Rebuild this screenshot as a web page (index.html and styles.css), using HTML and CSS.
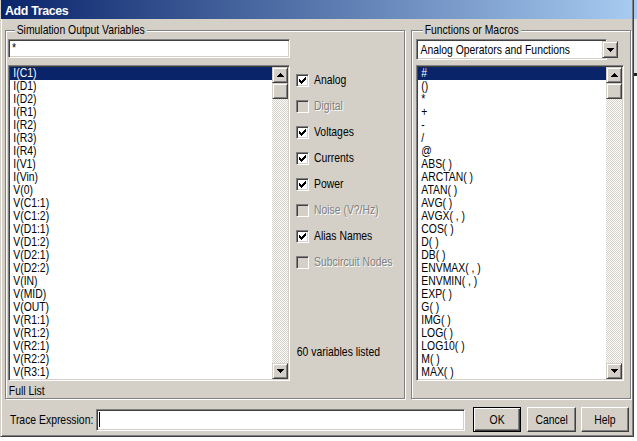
FILE: index.html
```html
<!DOCTYPE html>
<html>
<head>
<meta charset="utf-8">
<link rel="stylesheet" href="styles.css">
</head>
<body>
<div class="window">
  <div class="titlebar">Add Traces</div>
  <div class="client">
    <div class="groups">
      <div class="group group-left">
        <div class="legend">Simulation Output Variables</div>
        <div class="left-body">
          <div class="listcol">
            <div class="textbox"><span class="nx">*</span></div>
            <div class="listbox">
              <div class="items">
                <div class="item sel">I(C1)</div>
                <div class="item">I(D1)</div>
                <div class="item">I(D2)</div>
                <div class="item">I(R1)</div>
                <div class="item">I(R2)</div>
                <div class="item">I(R3)</div>
                <div class="item">I(R4)</div>
                <div class="item">I(V1)</div>
                <div class="item">I(Vin)</div>
                <div class="item">V(0)</div>
                <div class="item">V(C1:1)</div>
                <div class="item">V(C1:2)</div>
                <div class="item">V(D1:1)</div>
                <div class="item">V(D1:2)</div>
                <div class="item">V(D2:1)</div>
                <div class="item">V(D2:2)</div>
                <div class="item">V(IN)</div>
                <div class="item">V(MID)</div>
                <div class="item">V(OUT)</div>
                <div class="item">V(R1:1)</div>
                <div class="item">V(R1:2)</div>
                <div class="item">V(R2:1)</div>
                <div class="item">V(R2:2)</div>
                <div class="item">V(R3:1)</div>
              </div>
              <div class="vscroll">
                <div class="sbtn"><svg width="7" height="4" shape-rendering="crispEdges"><rect x="3" y="0" width="1" height="1"/><rect x="2" y="1" width="3" height="1"/><rect x="1" y="2" width="5" height="1"/><rect x="0" y="3" width="7" height="1"/></svg></div>
                <div class="thumb"></div>
                <div class="track"></div>
                <div class="sbtn"><svg width="7" height="4" shape-rendering="crispEdges"><rect x="0" y="0" width="7" height="1"/><rect x="1" y="1" width="5" height="1"/><rect x="2" y="2" width="3" height="1"/><rect x="3" y="3" width="1" height="1"/></svg></div>
              </div>
            </div>
            <div class="fulllist">Full List</div>
          </div>
          <div class="checkcol">
            <div class="check"><div class="cbox"><svg width="9" height="9" shape-rendering="crispEdges"><g transform="translate(1,1)"><rect x="6" y="0" width="1" height="1"/><rect x="5" y="1" width="2" height="1"/><rect x="0" y="2" width="1" height="1"/><rect x="4" y="2" width="3" height="1"/><rect x="0" y="3" width="2" height="1"/><rect x="3" y="3" width="3" height="1"/><rect x="0" y="4" width="5" height="1"/><rect x="1" y="5" width="3" height="1"/><rect x="2" y="6" width="1" height="1"/></g></svg></div><span class="lbl">Analog</span></div>
            <div class="check disabled"><div class="cbox"></div><span class="lbl">Digital</span></div>
            <div class="check"><div class="cbox"><svg width="9" height="9" shape-rendering="crispEdges"><g transform="translate(1,1)"><rect x="6" y="0" width="1" height="1"/><rect x="5" y="1" width="2" height="1"/><rect x="0" y="2" width="1" height="1"/><rect x="4" y="2" width="3" height="1"/><rect x="0" y="3" width="2" height="1"/><rect x="3" y="3" width="3" height="1"/><rect x="0" y="4" width="5" height="1"/><rect x="1" y="5" width="3" height="1"/><rect x="2" y="6" width="1" height="1"/></g></svg></div><span class="lbl">Voltages</span></div>
            <div class="check"><div class="cbox"><svg width="9" height="9" shape-rendering="crispEdges"><g transform="translate(1,1)"><rect x="6" y="0" width="1" height="1"/><rect x="5" y="1" width="2" height="1"/><rect x="0" y="2" width="1" height="1"/><rect x="4" y="2" width="3" height="1"/><rect x="0" y="3" width="2" height="1"/><rect x="3" y="3" width="3" height="1"/><rect x="0" y="4" width="5" height="1"/><rect x="1" y="5" width="3" height="1"/><rect x="2" y="6" width="1" height="1"/></g></svg></div><span class="lbl">Currents</span></div>
            <div class="check"><div class="cbox"><svg width="9" height="9" shape-rendering="crispEdges"><g transform="translate(1,1)"><rect x="6" y="0" width="1" height="1"/><rect x="5" y="1" width="2" height="1"/><rect x="0" y="2" width="1" height="1"/><rect x="4" y="2" width="3" height="1"/><rect x="0" y="3" width="2" height="1"/><rect x="3" y="3" width="3" height="1"/><rect x="0" y="4" width="5" height="1"/><rect x="1" y="5" width="3" height="1"/><rect x="2" y="6" width="1" height="1"/></g></svg></div><span class="lbl">Power</span></div>
            <div class="check disabled"><div class="cbox"></div><span class="lbl">Noise (V?/Hz)</span></div>
            <div class="check"><div class="cbox"><svg width="9" height="9" shape-rendering="crispEdges"><g transform="translate(1,1)"><rect x="6" y="0" width="1" height="1"/><rect x="5" y="1" width="2" height="1"/><rect x="0" y="2" width="1" height="1"/><rect x="4" y="2" width="3" height="1"/><rect x="0" y="3" width="2" height="1"/><rect x="3" y="3" width="3" height="1"/><rect x="0" y="4" width="5" height="1"/><rect x="1" y="5" width="3" height="1"/><rect x="2" y="6" width="1" height="1"/></g></svg></div><span class="lbl">Alias Names</span></div>
            <div class="check disabled"><div class="cbox"></div><span class="lbl">Subcircuit Nodes</span></div>
            <div class="count">60 variables listed</div>
          </div>
        </div>
      </div>
      <div class="group group-right">
        <div class="legend">Functions or Macros</div>
        <div class="combo">
          <div class="combo-text">Analog Operators and Functions</div>
          <div class="combo-btn"><svg width="7" height="4" shape-rendering="crispEdges"><rect x="0" y="0" width="7" height="1"/><rect x="1" y="1" width="5" height="1"/><rect x="2" y="2" width="3" height="1"/><rect x="3" y="3" width="1" height="1"/></svg></div>
        </div>
        <div class="listbox flist">
          <div class="items">
            <div class="item sel">#</div>
            <div class="item">()</div>
            <div class="item">*</div>
            <div class="item">+</div>
            <div class="item">-</div>
            <div class="item">/</div>
            <div class="item">@</div>
            <div class="item">ABS( )</div>
            <div class="item">ARCTAN( )</div>
            <div class="item">ATAN( )</div>
            <div class="item">AVG( )</div>
            <div class="item">AVGX( , )</div>
            <div class="item">COS( )</div>
            <div class="item">D( )</div>
            <div class="item">DB( )</div>
            <div class="item">ENVMAX( , )</div>
            <div class="item">ENVMIN( , )</div>
            <div class="item">EXP( )</div>
            <div class="item">G( )</div>
            <div class="item">IMG( )</div>
            <div class="item">LOG( )</div>
            <div class="item">LOG10( )</div>
            <div class="item">M( )</div>
            <div class="item">MAX( )</div>
          </div>
          <div class="vscroll">
            <div class="sbtn"><svg width="7" height="4" shape-rendering="crispEdges"><rect x="3" y="0" width="1" height="1"/><rect x="2" y="1" width="3" height="1"/><rect x="1" y="2" width="5" height="1"/><rect x="0" y="3" width="7" height="1"/></svg></div>
            <div class="thumb"></div>
            <div class="track"></div>
            <div class="sbtn"><svg width="7" height="4" shape-rendering="crispEdges"><rect x="0" y="0" width="7" height="1"/><rect x="1" y="1" width="5" height="1"/><rect x="2" y="2" width="3" height="1"/><rect x="3" y="3" width="1" height="1"/></svg></div>
          </div>
        </div>
      </div>
    </div>
    <div class="bottom">
      <div class="trace-label">Trace Expression:</div>
      <div class="trace-input"><span class="caret"></span></div>
      <div class="btn default btn-ok"><span class="nx-c">OK</span></div>
      <div class="btn btn-cancel"><span class="nx-c">Cancel</span></div>
      <div class="btn btn-help"><span class="nx-c">Help</span></div>
    </div>
  </div>
</div>
</body>
</html>
```

FILE: styles.css
```css
* { box-sizing: border-box; }
html, body { margin: 0; padding: 0; }
body {
  width: 637px;
  height: 441px;
  overflow: hidden;
  background: linear-gradient(to bottom, #a6caf0 0 19px, #e4e4e4 19px 73px, #202020 73px 76px, #ffffff 76px);
  font-family: "Liberation Sans", Arial, sans-serif;
  font-size: 12.6px;
  color: #000;
}
/* the dialog font is a tall, narrow bitmap sans: squeeze Liberation Sans horizontally */
.nx, .nx-c, .legend, .lbl, .count, .fulllist, .combo-text, .trace-label {
  display: inline-block;
  transform: scaleX(0.825);
  transform-origin: 0 50%;
}
.nx-c { transform-origin: 50% 50%; }
.window {
  width: 634px;
  height: 437px;
  background: #d4d0c8;
  border-left: 1px solid #d4d0c8;
  border-right: 1px solid #404040;
  border-bottom: 1px solid #404040;
  box-shadow: inset 1px 0 #fff, inset -1px -1px #808080;
  display: flex;
  flex-direction: column;
}
.titlebar {
  height: 19px;
  margin-right: 1px;
  padding: 2px 0 0 4px;
  display: flex;
  align-items: center;
  background: linear-gradient(to right, #0a246a, #a6caf0);
  color: #fff;
  font-family: "Liberation Sans", Arial, sans-serif;
  font-weight: bold;
  font-size: 12.4px;
  letter-spacing: -0.35px;
}
.client {
  flex: 1;
  padding: 11px 1px 0 4px;
  display: flex;
  flex-direction: column;
}
.groups {
  display: flex;
  gap: 6px;
  height: 369px;
}
.group {
  border: 1px solid #808080;
  box-shadow: inset 1px 1px #fff, 1px 1px #fff;
  display: flex;
  flex-direction: column;
  flex: none;
}
.legend {
  align-self: flex-start;
  height: 13px;
  line-height: 13px;
  margin: -7px 0 2px 7px;
  padding: 0 3px 0 2px;
  background: #d4d0c8;
  white-space: nowrap;
}
.group-left {
  width: 400px;
  padding-left: 2px;
}
.group-left .legend { margin-left: 7px; }
.group-right {
  width: 220px;
  padding-left: 4px;
}
.left-body {
  display: flex;
  gap: 6px;
  flex: 1;
}
.listcol {
  width: 282px;
  flex: none;
  display: flex;
  flex-direction: column;
}
.textbox, .listbox, .combo, .trace-input, .cbox {
  border: 1px solid;
  border-color: #808080 #fff #fff #808080;
  box-shadow: inset 1px 1px #404040, inset -1px -1px #d4d0c8;
}
.textbox {
  height: 19px;
  background: #fff;
  padding: 1px 0 0 3px;
  line-height: 15px;
}
.listbox {
  margin-top: 7px;
  height: 316px;
  background: #fff;
  display: flex;
  padding: 1px;
}
.items {
  flex: 1;
  overflow: hidden;
}
.item {
  width: 121.3%;
  height: 13px;
  line-height: 13px;
  padding-left: 4px;
  white-space: nowrap;
  transform: scaleX(0.825);
  transform-origin: 0 50%;
}
.item.sel {
  background: #0a246a;
  color: #fff;
}
.vscroll {
  width: 16px;
  flex: none;
  display: flex;
  flex-direction: column;
  background: repeating-conic-gradient(#d4d0c8 0 25%, #fff 0 50%) 0 0 / 2px 2px;
}
.sbtn, .thumb, .combo-btn {
  width: 16px;
  height: 16px;
  flex: none;
  background: #d4d0c8;
  border: 1px solid;
  border-color: #d4d0c8 #404040 #404040 #d4d0c8;
  box-shadow: inset 1px 1px #fff, inset -1px -1px #808080;
  display: flex;
  align-items: center;
  justify-content: center;
}
.sbtn svg, .combo-btn svg { fill: #000; display: block; }
.track { flex: 1; }
.fulllist {
  margin-top: 4px;
  line-height: 13px;
  padding-left: 1px;
}
.checkcol {
  flex: 1;
  padding-top: 28px;
  display: flex;
  flex-direction: column;
}
.check {
  height: 26px;
  display: flex;
  align-items: center;
  gap: 5px;
  white-space: nowrap;
}
.cbox {
  width: 13px;
  height: 13px;
  background: #fff;
  padding: 1px;
  flex: none;
}
.cbox svg { display: block; fill: #000; }
.check.disabled .cbox { background: #d4d0c8; }
.check.disabled .lbl {
  color: #808080;
  text-shadow: 1px 1px 0 #fff;
}
.count {
  align-self: flex-start;
  margin-top: 71px;
  line-height: 13px;
  padding-left: 1px;
  white-space: nowrap;
}
.combo {
  width: 191px;
  height: 21px;
  background: #fff;
  display: flex;
  align-items: center;
  padding: 1px;
}
.combo-text {
  flex: 1;
  padding-left: 3px;
  white-space: nowrap;
}
.combo-btn {
  height: 17px;
}
.flist {
  margin-top: 5px;
  width: 208px;
}
.bottom {
  margin-top: 8px;
  height: 25px;
  display: flex;
  align-items: center;
}
.trace-label {
  width: 91px;
  padding-left: 6px;
  flex: none;
  white-space: nowrap;
}
.trace-input {
  width: 369px;
  height: 22px;
  flex: none;
  background: #fff;
  display: flex;
  align-items: center;
  padding-left: 2px;
}
.caret {
  width: 1px;
  height: 15px;
  background: #000;
}
.btn {
  height: 25px;
  flex: none;
  display: flex;
  align-items: center;
  justify-content: center;
  background: #d4d0c8;
  border: 1px solid;
  border-color: #fff #404040 #404040 #fff;
  box-shadow: inset -1px -1px #808080;
}
.btn.default {
  border-color: #000;
  box-shadow: inset 1px 1px #fff, inset -1px -1px #404040, inset -2px -2px #808080;
}
.btn-ok { width: 48px; margin-left: 8px; }
.btn-cancel { width: 49px; margin-left: 6px; }
.btn-help { width: 48px; margin-left: 5px; }
```
